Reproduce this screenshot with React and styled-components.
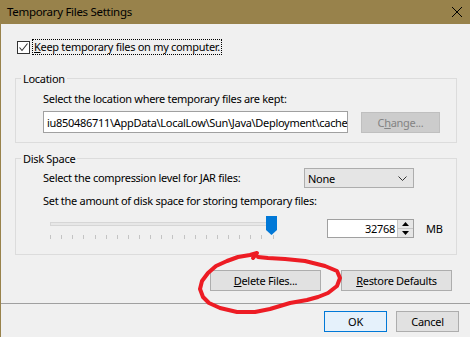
import React from "react";
import styled, { createGlobalStyle } from "styled-components";

const GlobalStyle = createGlobalStyle`
  html, body {
    margin: 0;
    padding: 0;
    background: #f0f0f0;
  }
  body {
    font-family: "Segoe UI", "Noto Sans", sans-serif;
    font-size: 11px;
    letter-spacing: -0.3px;
    color: #000;
  }
`;

const Screen = styled.div`
  position: relative;
  width: 470px;
  height: 337px;
  overflow: hidden;
`;

const Window = styled.div`
  height: 100%;
  border-left: 1px solid #98824b;
  background: #f0f0f0;
  display: flex;
  flex-direction: column;
`;

const TitleBar = styled.div`
  height: 24px;
  flex: none;
  background: #98824b;
  display: flex;
  align-items: center;
  justify-content: space-between;
  padding: 0 8px 0 6px;
`;

const TitleText = styled.span`
  font-size: 11.5px;
  line-height: 16px;
`;

const Body = styled.div`
  padding: 16px 0 0 0;
  display: flex;
  flex-direction: column;
`;

const CheckRow = styled.label`
  display: flex;
  align-items: center;
  gap: 3px;
  margin-left: 16px;
  height: 14px;
`;

const CheckBox = styled.span`
  width: 11px;
  height: 11px;
  border: 1px solid #333;
  background: #fff;
  display: flex;
  align-items: center;
  justify-content: center;
`;

const Focused = styled.span`
  outline: 1px dotted #000;
  outline-offset: 0;
  padding: 0 1px;
  line-height: 14px;
`;

const Mnemonic = styled.span`
  text-decoration: underline;
`;

const Group = styled.fieldset`
  margin: ${(p) => p.$top}px 0 0 14px;
  width: 442px;
  box-sizing: border-box;
  border: 1px solid #dcdcdc;
  padding: 0 0 ${(p) => p.$bottom}px 27px;
  min-width: 0;
`;

const Legend = styled.legend`
  padding: 0 2px;
  margin-left: -22px;
  line-height: 15px;
`;

const Line = styled.div`
  line-height: 14px;
  height: 14px;
  margin-top: ${(p) => p.$top || 0}px;
`;

const Row = styled.div`
  display: flex;
  align-items: ${(p) => p.$align || "center"};
  margin-top: ${(p) => p.$top || 0}px;
`;

const PathBox = styled.div`
  width: 305px;
  height: 22px;
  box-sizing: border-box;
  border: 1px solid #a0a0a0;
  background: #fff;
  display: flex;
  align-items: center;
  padding: 0 3px;
  white-space: nowrap;
  overflow: hidden;
`;

const Button = styled.button`
  font: inherit;
  letter-spacing: inherit;
  color: ${(p) => (p.disabled ? "#838383" : "#000")};
  width: ${(p) => p.$w}px;
  height: 21px;
  margin-left: ${(p) => p.$ml || 0}px;
  padding: 0;
  box-sizing: border-box;
  border: 1px solid ${(p) => (p.$primary ? "#0078d7" : p.disabled ? "#bfbfbf" : "#adadad")};
  background: ${(p) => (p.$primary ? "#e5f1fb" : p.disabled ? "#cccccc" : "#e1e1e1")};
  line-height: 17px;
`;

const FieldLabel = styled.span`
  width: 261px;
  line-height: 14px;
`;

const Combo = styled.div`
  width: 110px;
  height: 20px;
  box-sizing: border-box;
  border: 1px solid #adadad;
  background: #e5e5e5;
  display: flex;
  align-items: center;
  justify-content: space-between;
  padding: 0 6px 0 3px;
`;

const Slider = styled.div`
  width: 234px;
  margin-left: 7px;
  height: 26px;
  display: flex;
  flex-direction: column;
`;

const TrackRow = styled.div`
  display: flex;
  align-items: flex-start;
  height: 21px;
`;

const Track = styled.div`
  width: 220px;
  height: 2px;
  flex: none;
  margin-top: 8px;
  border: 1px solid #d6d6d6;
  background: #e7e7e7;
`;

const Thumb = styled.svg`
  display: block;
  flex: none;
  margin: 2px 0 0 -6px;
`;

const Ticks = styled.div`
  display: flex;
  gap: 10.13px;
  height: 4px;
  margin-top: 0;
`;

const Tick = styled.span`
  width: 1px;
  height: 4px;
  flex: none;
  background: #c4c4c4;
`;

const Spinner = styled.div`
  margin: 5px 0 0 43px;
  width: 87px;
  height: 19px;
  box-sizing: border-box;
  border: 1px solid #a0a0a0;
  background: #fff;
  display: flex;
`;

const SpinValue = styled.span`
  flex: 1;
  text-align: right;
  padding-right: 2px;
  line-height: 17px;
`;

const SpinButtons = styled.div`
  width: 15px;
  display: flex;
  flex-direction: column;
  border-left: 1px solid #c6c6c6;
  background: #e6e6e6;
`;

const SpinButton = styled.div`
  flex: 1;
  display: flex;
  align-items: center;
  justify-content: center;
  border-top: ${(p) => (p.$lower ? "1px solid #c6c6c6" : "none")};
`;

const Unit = styled.span`
  margin: 5px 0 0 12px;
  line-height: 19px;
`;

const ActionRow = styled.div`
  display: flex;
  margin: 15px 0 0 209px;
  gap: 20px;
`;

const Separator = styled.div`
  height: 1px;
  background: #a0a0a0;
  margin-top: 12px;
`;

const DialogButtons = styled.div`
  display: flex;
  margin: 7px 0 0 323px;
  gap: 9px;
`;

const Annotation = styled.svg`
  position: absolute;
  left: 0;
  top: 0;
  pointer-events: none;
`;

const redPath =
  "M253 258 L257 253 L250 255 L238 257 L227 261 L216 266 L208 273 L202 281 L200 289 L203 297 L209 303 L220 308 L237 312 L255 312 L270 309 L290 303 L307 300 L318 297 L328 293 L337 286 L340 278 L337 271 L325 266 L305 261 L285 259 L268 258 L258 257";

export default function App() {
  const ticks = Array.from({ length: 21 });
  return (
    <Screen>
      <GlobalStyle />
      <Window>
        <TitleBar>
          <TitleText>Temporary Files Settings</TitleText>
          <svg width="10" height="10" viewBox="0 0 10 10">
            <path d="M0 0 L10 10 M10 0 L0 10" stroke="#000" strokeWidth="1" />
          </svg>
        </TitleBar>
        <Body>
          <CheckRow>
            <CheckBox>
              <svg width="11" height="11" viewBox="0 0 11 11">
                <path d="M1.5 5.5 L4 8.5 L9.5 1.5" fill="none" stroke="#333" strokeWidth="1.1" />
              </svg>
            </CheckBox>
            <Focused>
              <Mnemonic>K</Mnemonic>eep temporary files on my computer.
            </Focused>
          </CheckRow>

          <Group $top={17} $bottom={9}>
            <Legend>Location</Legend>
            <Line $top={6}>Select the location where temporary files are kept:</Line>
            <Row $top={5}>
              <PathBox>iu850486711\AppData\LocalLow\Sun\Java\Deployment\cache</PathBox>
              <Button disabled $w={79} $ml={13}>
                C<Mnemonic>h</Mnemonic>ange...
              </Button>
            </Row>
          </Group>

          <Group $top={8} $bottom={14}>
            <Legend>Disk Space</Legend>
            <Row $top={2}>
              <FieldLabel>Select the compression level for JAR files:</FieldLabel>
              <Combo>
                <span>None</span>
                <svg width="9" height="5" viewBox="0 0 9 5">
                  <path d="M0.5 0.5 L4.5 4.5 L8.5 0.5" fill="none" stroke="#333" strokeWidth="1" />
                </svg>
              </Combo>
            </Row>
            <Line $top={6}>Set the amount of disk space for storing temporary files:</Line>
            <Row $top={6} $align="flex-start">
              <Slider>
                <TrackRow>
                  <Track />
                  <Thumb width="11" height="19" viewBox="0 0 11 19">
                    <path d="M0 0 H11 V14 L5.5 19 L0 14 Z" fill="#0078d7" />
                  </Thumb>
                </TrackRow>
                <Ticks>
                  {ticks.map((_, i) => (
                    <Tick key={i} />
                  ))}
                </Ticks>
              </Slider>
              <Spinner>
                <SpinValue>32768</SpinValue>
                <SpinButtons>
                  <SpinButton>
                    <svg width="7" height="4" viewBox="0 0 7 4">
                      <path d="M0 4 L3.5 0 L7 4 Z" fill="#000" />
                    </svg>
                  </SpinButton>
                  <SpinButton $lower>
                    <svg width="7" height="4" viewBox="0 0 7 4">
                      <path d="M0 0 L3.5 4 L7 0 Z" fill="#000" />
                    </svg>
                  </SpinButton>
                </SpinButtons>
              </Spinner>
              <Unit>MB</Unit>
            </Row>
          </Group>

          <ActionRow>
            <Button $w={111}>
              <Mnemonic>D</Mnemonic>elete Files...
            </Button>
            <Button $w={111}>
              <Mnemonic>R</Mnemonic>estore Defaults
            </Button>
          </ActionRow>

          <Separator />

          <DialogButtons>
            <Button $primary $w={63}>OK</Button>
            <Button $w={63}>Cancel</Button>
          </DialogButtons>
        </Body>
      </Window>
      <Annotation width="470" height="337" viewBox="0 0 470 337">
        <path
          d={redPath}
          fill="none"
          stroke="#ed1c24"
          strokeWidth="4"
          strokeLinejoin="round"
          strokeLinecap="round"
        />
      </Annotation>
    </Screen>
  );
}
